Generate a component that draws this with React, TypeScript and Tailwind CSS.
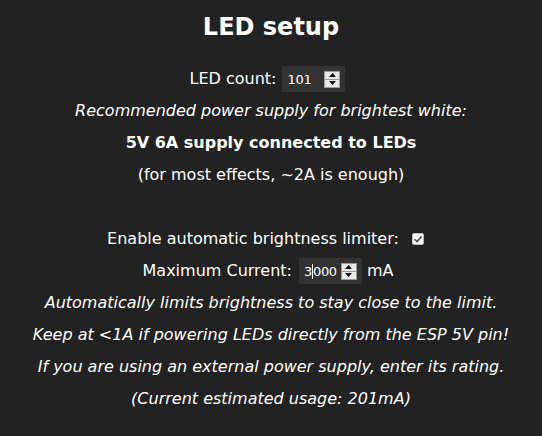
import React from "react";

// small fake number input with the native-looking spin box
function NumberBox({ value, caret }: { value: string; caret?: number }) {
  const before = caret !== undefined ? value.slice(0, caret) : value;
  const after = caret !== undefined ? value.slice(caret) : "";
  return (
    <span className="inline-flex items-center align-middle bg-[#333] h-[26px] w-[63px] pl-[5px] pr-[5px] text-[13px] tracking-[-0.3px] leading-none text-white">
      <span>{before}</span>
      {caret !== undefined && <span className="w-px h-[15px] bg-white" />}
      <span>{after}</span>
      <span className="ml-auto flex flex-col w-[16px] h-[17px] border border-[#9a9a9a] bg-[#e9e9e9]">
        <span className="flex-1 flex items-center justify-center border-b border-[#9a9a9a]">
          <svg width="7" height="4" viewBox="0 0 7 4">
            <path d="M0 4 L3.5 0 L7 4 Z" fill="#111" />
          </svg>
        </span>
        <span className="flex-1 flex items-center justify-center">
          <svg width="7" height="4" viewBox="0 0 7 4">
            <path d="M0 0 L3.5 4 L7 0 Z" fill="#111" />
          </svg>
        </span>
      </span>
    </span>
  );
}

export default function App() {
  return (
    <div
      className="min-h-[436px] bg-[#222] text-white text-center text-[16px] leading-[32px] pt-[11px]"
      style={{ fontFamily: '"DejaVu Sans", Verdana, sans-serif' }}
    >
      <h2 className="text-[24px] font-bold leading-[32px] mb-[20px]">LED setup</h2>

      <div className="flex items-center justify-center gap-[6px] pr-[7px]">
        <span>LED count:</span>
        <NumberBox value="101" />
      </div>
      <div className="italic">Recommended power supply for brightest white:</div>
      <div className="font-bold">5V 6A supply connected to LEDs</div>
      <div>(for most effects, ~2A is enough)</div>
      <div className="h-[32px]" />

      <div className="flex items-center justify-center gap-[13px] pr-[11px]">
        <span>Enable automatic brightness limiter:</span>
        <span className="inline-flex items-center justify-center w-[12px] h-[12px] bg-white border border-[#bbb] rounded-[2px]">
          <svg width="10" height="10" viewBox="0 0 10 10">
            <path d="M1.5 5.2 L4 7.6 L8.6 2.2" stroke="#444" strokeWidth="1.5" fill="none" />
          </svg>
        </span>
      </div>
      <div className="flex items-center justify-center gap-[7px] pr-[6px]">
        <span>Maximum Current:</span>
        <NumberBox value="3000" caret={1} />
        <span className="-ml-[2px]">mA</span>
      </div>
      <div className="italic">Automatically limits brightness to stay close to the limit.</div>
      <div className="italic">Keep at &lt;1A if powering LEDs directly from the ESP 5V pin!</div>
      <div className="italic">If you are using an external power supply, enter its rating.</div>
      <div className="italic">(Current estimated usage: 201mA)</div>
    </div>
  );
}
